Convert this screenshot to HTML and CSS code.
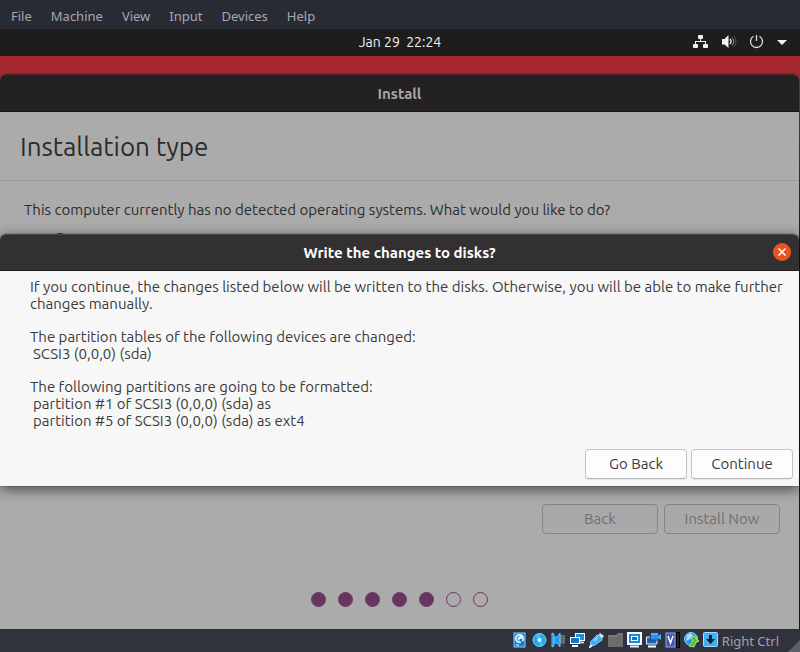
FILE: index.html
```html
<!DOCTYPE html>
<html lang="en">
<head>
<meta charset="utf-8">
<title>Install</title>
<link rel="stylesheet" href="styles.css">
</head>
<body>
<nav class="menubar">
  <a href="#">File</a><a href="#">Machine</a><a href="#">View</a><a href="#">Input</a><a href="#">Devices</a><a href="#">Help</a>
</nav>
<div class="panel">
  <time class="clock">Jan 29&nbsp; 22:24</time>
  <div class="tray">
    <svg width="16" height="16" viewBox="0 0 16 16" fill="#f2f2f2"><rect x="5" y="1" width="5" height="4" rx="1"/><rect x="0" y="10" width="5" height="4" rx="1"/><rect x="10" y="10" width="5" height="4" rx="1"/><path d="M7 5h1v2h5v3h-1V8H3v2H2V7h5z"/></svg>
    <svg width="16" height="16" viewBox="0 0 16 16"><path d="M1 5h2.500L7.500 1v13L3.500 10.500H1z" fill="#f2f2f2"/><path d="M9 5q2 2.500 0 5" fill="none" stroke="#ddd" stroke-width="1.500"/><path d="M11 3.500q3.500 4 0 8" fill="none" stroke="#999"/><path d="M13 2q4 5.500 0 11" fill="none" stroke="#555"/></svg>
    <svg width="16" height="16" viewBox="0 0 16 16" fill="none" stroke="#dedede" stroke-width="1.300"><path d="M4.500 2.300a6 6 0 1 0 6 0M7.500 1v6"/></svg>
    <svg width="14" height="16" viewBox="0 0 14 16"><path d="M4 6h10L9 11z" fill="#f2f2f2"/></svg>
  </div>
</div>
<div class="desktop">
  <main class="window">
    <header class="titlebar">Install</header>
    <h1>Installation type</h1>
    <section class="options">
      <p>This computer currently has no detected operating systems. What would you like to do?</p>
      <input type="radio" class="option" aria-label="Installation option" checked>
    </section>
    <div class="actions">
      <button type="button" disabled>Back</button>
      <button type="button" disabled>Install Now</button>
    </div>
    <div class="steps"><i class="done"></i><i class="done"></i><i class="done"></i><i class="done"></i><i class="done"></i><i></i><i></i></div>
    <section class="dialog" role="dialog" aria-labelledby="dialog-title">
      <header class="dialog-title">
        <h2 id="dialog-title">Write the changes to disks?</h2>
        <button type="button" class="close" aria-label="Close"><svg width="18" height="18" viewBox="0 0 18 18"><path d="M5.500 5.500l7 7m0-7l-7 7" stroke="#fff" stroke-width="1.500"/></svg></button>
      </header>
      <div class="dialog-body">
        <p>If you continue, the changes listed below will be written to the disks. Otherwise, you will be able to make further changes manually.</p>
        <p>The partition tables of the following devices are changed:<span>SCSI3 (0,0,0) (sda)</span></p>
        <p>The following partitions are going to be formatted:<span>partition #1 of SCSI3 (0,0,0) (sda) as</span><span>partition #5 of SCSI3 (0,0,0) (sda) as ext4</span></p>
      </div>
      <div class="dialog-actions">
        <button type="button">Go Back</button>
        <button type="button">Continue</button>
      </div>
    </section>
  </main>
</div>
<footer class="statusbar">
  <svg width="15" height="16" viewBox="0 0 15 16"><rect x="1" y="1" width="11" height="14" fill="#1681d8" stroke="#8cd1ff"/><circle cx="6.500" cy="6.500" r="4.500" fill="#e8f7ff"/><path d="M6.500 4a2.500 2.500 0 1 0 2.500 2.500" fill="none" stroke="#1b80cf"/><path d="M7 7l3 5" stroke="#126cc0" stroke-width="1.500"/><path d="M3 13h3" stroke="#fff"/></svg>
  <svg width="15" height="16" viewBox="0 0 15 16"><circle cx="7.500" cy="8" r="6.500" fill="#21aaf2" stroke="#79d4ff"/><path d="M7.500 8L3 3a7 7 0 0 1 5-1.500zM7.500 8l4 5a7 7 0 0 1-4 1z" fill="#49bdfa"/><circle cx="7.500" cy="8" r="2" fill="#e9faff"/></svg>
  <svg width="15" height="16" viewBox="0 0 15 16"><path d="M9 3h5v9H9z" fill="#77777a"/><path d="M10 5h4M10 8h4M10 11h4M11 14h3" stroke="#4a4a50"/><path d="M1 1l2 1v12l-2 1z" fill="#1c83d4" stroke="#65c5ff"/><path d="M3 5h3l3-4v14l-3-4H3z" fill="#249be9" stroke="#65c5ff"/></svg>
  <svg width="15" height="16" viewBox="0 0 15 16"><rect x="5.500" y="1.500" width="9" height="7" fill="#1b8ddf" stroke="#fff"/><path d="M10 10.500h4" stroke="#ccc" stroke-width="2"/><rect x=".5" y="5.500" width="9" height="6" fill="#1375d0" stroke="#fff"/><path d="M2 14h6" stroke="#fff" stroke-width="2"/></svg>
  <svg width="15" height="16" viewBox="0 0 15 16"><path d="M9 4l2-3 4 3-3 4z" fill="#eee" stroke="#888"/><path d="M1.500 10l6.500-7q4 0 5 5l-7 5-4 1z" fill="#3aaef4" stroke="#7dccff"/><path d="M5 9l4-4" stroke="#83d0ff" stroke-width="2"/><path d="M0 16l3-3" stroke="#d9f3ff" stroke-width="2"/></svg>
  <svg width="15" height="16" viewBox="0 0 15 16"><path d="M0 3h8l2-2h5v14H0z" fill="#6d6d6f"/><path d="M0 4h9l2-2h3" fill="none" stroke="#858587"/></svg>
  <svg width="15" height="16" viewBox="0 0 15 16"><rect x="1" y="1" width="13" height="11" fill="#168de0" stroke="#eefaff" stroke-width="2"/><rect x="4.500" y="4.500" width="6" height="4" fill="#1474c7" stroke="#fff"/><path d="M3 14.500h9" stroke="#eee" stroke-width="2"/></svg>
  <svg width="15" height="16" viewBox="0 0 15 16"><path d="M.5 5v7H11V5z" fill="#1266bd" stroke="#e6f4ff"/><path d="M2 14.500h8" stroke="#fff" stroke-width="2"/><rect x="4.500" y="1" width="8" height="7" fill="#388ee4" stroke="#174684"/><path d="M12 4l3-2v6l-3-2z" fill="#54a9ef"/><path d="M5 2h7" stroke="#9bd2ff"/></svg>
  <svg width="15" height="16" viewBox="0 0 15 16"><rect x="1" y="1" width="9" height="14" fill="#3e51aa" stroke="#90a4ef"/><path d="M1 3h9M1 13h9" stroke="#6f80dc" stroke-dasharray="1 1"/><path d="M3 4l2.500 7L8 4" fill="none" stroke="#fff" stroke-width="1.500"/><rect x="11.500" y=".5" width="3" height="15" fill="#222" stroke="#000"/></svg>
  <svg width="15" height="16" viewBox="0 0 15 16"><circle cx="7" cy="7" r="6.500" fill="#239ae8" stroke="#8bd4ff"/><path d="M3 3l3-2 3 2-3 4-4 2z" fill="#a5deff"/><path d="M7 5l5-1v3l3 2-3 1-2 5-5-1 4-5z" fill="#55bf24" stroke="#a4e677"/></svg>
  <svg width="15" height="16" viewBox="0 0 15 16"><rect x=".5" y=".5" width="14" height="14" rx="1" fill="#42b0ee" stroke="#a5ddff"/><path d="M6 3h3v4h3l-4.500 5L3 7h3z" fill="#0b2036"/></svg>
  <span>Right Ctrl</span>
  <svg class="grip" width="12" height="12" viewBox="0 0 12 12"><path d="M12 0v12H0z" fill="#5b5e67"/></svg>
</footer>
</body>
</html>
```
FILE: styles.css
```css
* { box-sizing: border-box; }
body {
  margin: 0;
  min-height: 100vh;
  display: flex;
  flex-direction: column;
  background: #300a29;
  color: #3b3b3b;
  font: 15px/17px Ubuntu, "Noto Sans", sans-serif;
}
h1, h2, p { margin: 0; }
button { font: inherit; color: inherit; padding: 0 0 2px; }
.menubar {
  display: flex;
  gap: 19px;
  padding: 4px 11px 0;
  height: 29px;
  background: #282b34;
  font: 13px/24px "Noto Sans", sans-serif;
}
.menubar a { color: #a5a8b0; text-decoration: none; }
.panel {
  display: grid;
  grid-template-columns: 1fr auto 1fr;
  align-items: start;
  height: 27px;
  padding: 5px 14px 0;
  background: #1d1d1d;
  color: #f2f2f2;
}
.clock { grid-column: 2; font-size: 14px; line-height: 16px; }
.tray { display: flex; justify-content: flex-end; gap: 12px; }
.tray svg { display: block; }
.tray svg:last-child { margin: 0 -1px 0 -4px; }
.desktop {
  flex: 1;
  display: flex;
  padding: 18px 1px 0 0;
  background: linear-gradient(#a92529, #a32834 18px, #851c3c 80px, #300a29 200px);
}
.window {
  flex: 1;
  display: flex;
  flex-direction: column;
  position: relative;
  background: #ababab;
  border-radius: 6px 6px 0 0;
  box-shadow: 0 0 2px #3008;
}
.titlebar {
  height: 38px;
  border-top: 1px solid #4a2029;
  border-bottom: 1px solid #151515;
  border-radius: 6px 6px 0 0;
  background: #242122;
  color: #a9a7a6;
  font-weight: bold;
  line-height: 38px;
  text-align: center;
}
h1 {
  padding: 18px 20px 17px;
  border-bottom: 1px solid #999;
  color: #2b2b2b;
  font-size: 26px;
  font-weight: 400;
  line-height: 33px;
}
.options { padding: 20px 24px 0; color: #2c2c2c; }
.option {
  appearance: none;
  display: block;
  width: 14px;
  height: 14px;
  margin: 15px 0 0 29px;
  border-radius: 50%;
  background: #4b2445;
}
.actions {
  display: flex;
  justify-content: flex-end;
  gap: 6px;
  margin-top: auto;
  padding: 0 19px;
}
.actions button {
  width: 116px;
  height: 30px;
  border: 1px solid #858585;
  border-radius: 4px;
  background: #a9a9a9;
  color: #707070;
}
.steps { display: flex; justify-content: center; gap: 12px; padding: 58px 0 22px; }
.steps i { width: 15px; height: 15px; border: 1px solid #6c3965; border-radius: 50%; }
.steps .done { background: #673660; }
.dialog {
  position: absolute;
  top: 160px;
  left: 0;
  right: 0;
  border-radius: 6px 6px 0 0;
  background: #f7f7f7;
  box-shadow: 0 3px 14px #0009, 0 0 1px #000;
}
.dialog-title {
  display: grid;
  grid-template-columns: 1fr auto 1fr;
  align-items: start;
  height: 37px;
  padding: 8px 8px 0;
  border-top: 1px solid #4b4748;
  border-bottom: 1px solid #1c1a1b;
  border-radius: 6px 6px 0 0;
  background: #333031;
  color: #fff;
}
h2 { grid-column: 2; font-size: 15px; line-height: 20px; }
.close {
  justify-self: end;
  width: 18px;
  height: 18px;
  padding: 0;
  border: 0;
  border-radius: 50%;
  background: #e95420;
}
.close svg { display: block; }
.dialog-body { display: grid; gap: 16px; padding: 7px 12px 0 30px; }
.dialog-body span { display: block; padding-left: 3px; }
.dialog-actions {
  display: flex;
  justify-content: flex-end;
  gap: 4px;
  padding: 20px 6px 7px;
}
.dialog-actions button {
  width: 102px;
  height: 30px;
  border: 1px solid #c4c4c4;
  border-bottom-color: #b5b5b5;
  border-radius: 4px;
  background: #fdfdfd;
  box-shadow: 0 1px 1px #0001;
}
.statusbar {
  display: flex;
  align-items: flex-start;
  justify-content: flex-end;
  gap: 4px;
  height: 23px;
  padding-top: 3px;
  background: #30333d;
  color: #a0a3ab;
  font: 13px/18px "Noto Sans", sans-serif;
}
.grip { align-self: flex-end; margin-left: 5px; }
```
